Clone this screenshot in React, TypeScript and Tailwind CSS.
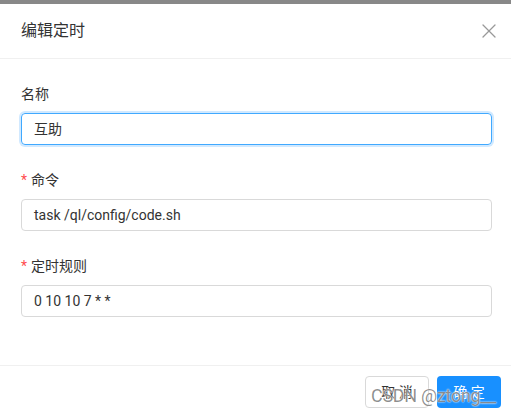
import { X } from "lucide-react";

const font = { fontFamily: 'Roboto, "Noto Sans CJK SC", sans-serif' };

function Field({ label, value, required, focused }: { label: string; value: string; required?: boolean; focused?: boolean }) {
  return (
    <div className="mb-6">
      <div className="flex items-center h-[22px] mb-2 text-sm text-[#333333]">
        {required && <span className="text-[#ff4d4f] mr-1 text-sm leading-none">*</span>}
        {label}
      </div>
      <div
        className={
          focused
            ? "h-8 pl-3 pr-[11px] flex items-center rounded-sm border border-[#40a9ff] shadow-[0_0_0_2px_rgba(24,144,255,0.2)] text-sm text-[#333333]"
            : "h-8 pl-3 pr-[11px] flex items-center rounded-sm border border-[#d9d9d9] text-sm text-[#333333]"
        }
      >
        {value}
      </div>
    </div>
  );
}

export default function App() {
  return (
    <div className="relative w-[511px] h-[418px] overflow-hidden bg-white" style={font}>
      <div className="h-1 bg-[#888888]" />
      <div className="h-[55px] flex items-center justify-between pl-[21px] pr-[10px] border-b border-[#f0f0f0]">
        <span className="text-base text-[#333333]">编辑定时</span>
        <X className="w-6 h-6 text-[#999999]" strokeWidth={1.3} />
      </div>
      <div className="flex flex-col pt-6 pb-6 pl-[21px] pr-[19px]">
        <Field label="名称" value="互助" focused />
        <Field label="命令" value="task /ql/config/code.sh" required />
        <Field label="定时规则" value="0 10 10 7 * *" required />
      </div>
      <div className="h-[53px] border-t border-[#f0f0f0] flex items-center justify-end gap-2 pr-[10px]">
        <button className="w-16 h-8 rounded-sm border border-[#d9d9d9] bg-white text-sm text-[#333333]">取 消</button>
        <button className="w-16 h-8 rounded-sm bg-[#1890ff] text-sm text-white">确 定</button>
      </div>
      <div className="absolute left-[371px] top-[385px] text-[18px] leading-[22px] tracking-[-0.3px] text-[#000]/45 [text-shadow:0_0_1px_#fff,0_0_2px_#fff] pointer-events-none">
        CSDN @ztong__
      </div>
    </div>
  );
}
